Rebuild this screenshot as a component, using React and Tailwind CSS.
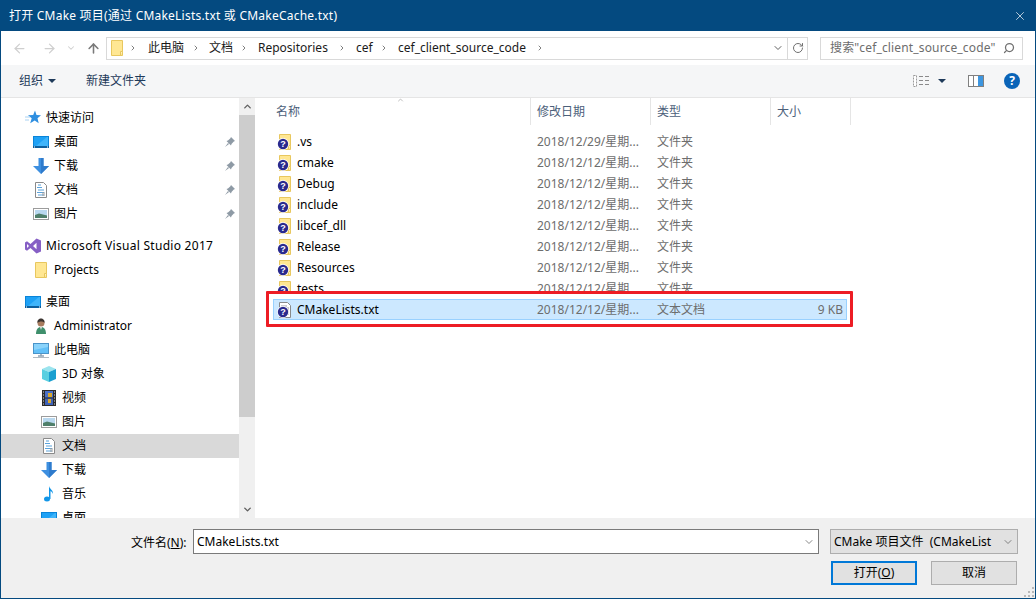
import { ChevronRight, ChevronDown, ChevronUp, ArrowLeft, ArrowRight, ArrowUp, RotateCw, Search, X } from 'lucide-react'

const Folder = ({ className = 'w-4 h-4' }) => (
  <svg viewBox="0 0 16 16" className={className}>
    <path d="M2.500.5h11v15h-11z" fill="#ffe793" stroke="#e8c75e" />
    <path d="M13.500 11.500h-2v4" fill="#fff3c0" stroke="#e8c75e" />
  </svg>
)

const Badge = () => (
  <svg viewBox="0 0 12 12" className="absolute left-0 bottom-0 w-[12px] h-[12px]">
    <circle cx="6" cy="6" r="5.900" fill="#fff" />
    <circle cx="6" cy="6" r="5.200" fill="#2a2a8e" />
    <text x="6" y="9.300" textAnchor="middle" fontSize="9" fontWeight="700" fill="#fff" fontFamily="Liberation Sans">?</text>
  </svg>
)

const Desktop = () => (
  <svg viewBox="0 0 16 16" className="w-4 h-4">
    <rect x="0" y="2" width="16" height="12" fill="#0a84d8" />
    <rect x="1" y="3" width="14" height="9" fill="#1ea1f5" />
    <path d="M3 12l11-9h1v9z" fill="#3fb4fa" />
    <rect x="0" y="12" width="16" height="2" fill="#0c5f9e" />
    <path d="M1 13h1M14 13h1" stroke="#fff" />
  </svg>
)

const Download = () => (
  <svg viewBox="0 0 16 16" className="w-4 h-4">
    <path d="M5.500 0h5v8H16l-8 8-8-8h5.500z" fill="#3d8fe0" />
    <path d="M8 0h2.500v8H16l-8 8z" fill="#2f7bcc" />
  </svg>
)

const Doc = () => (
  <svg viewBox="0 0 16 16" className="w-4 h-4">
    <path d="M2.500.5h8l3 3v12h-11z" fill="#fff" stroke="#8a8a8a" />
    <path d="M5 3h3M4 5.500h5M5 8h6M4 10.500h7M5 13h6" stroke="#5ba3dc" />
    <path d="M9 11h3M9 13h3" stroke="#9a9a9a" />
  </svg>
)

const Picture = () => (
  <svg viewBox="0 0 16 16" className="w-4 h-4">
    <rect x=".5" y="2.500" width="15" height="11" fill="#fff" stroke="#9c9c9c" />
    <rect x="2" y="4" width="12" height="8" fill="#b9d8ef" />
    <path d="M2 9l4-1.500 8 2V12H2z" fill="#4f7f6a" />
  </svg>
)

const VsLogo = () => (
  <svg viewBox="0 0 16 16" className="w-4 h-4">
    <path d="M11.500.5L16 2.500v11l-4.500 2L5.500 10l-3.500 2.700L0 11.500v-7L2 3.300 5.500 6z" fill="#865fc5" />
    <path d="M11.500 4.700L8 8l3.500 3.300zM2 6v4l2-2z" fill="#fff" />
  </svg>
)

const Person = () => (
  <svg viewBox="0 0 16 16" className="w-4 h-4">
    <path d="M3 16c0-4.500 2-7 5-7s5 2.500 5 7z" fill="#3f8f6c" />
    <circle cx="8" cy="5" r="3.500" fill="#a87c5f" />
    <path d="M4.500 5C4 2 6 .5 8 .5s4 1.500 3.500 4.500C10.500 3 6 3 4.500 5z" fill="#3b3430" />
    <path d="M7 9h2l-1 3z" fill="#e7e7e7" />
  </svg>
)

const Pc = () => (
  <svg viewBox="0 0 16 16" className="w-4 h-4">
    <rect x=".5" y="1.500" width="15" height="10" fill="#62c0f8" stroke="#4a94c9" />
    <path d="M1 2h14v3L1 8z" fill="#8ad3fb" />
    <path d="M5 14h6M8 12v2" stroke="#90a4b5" strokeWidth="1.500" />
    <path d="M0 15.500h16" stroke="#b0bac2" />
  </svg>
)

const Cube = () => (
  <svg viewBox="0 0 16 16" className="w-4 h-4">
    <path d="M8 0l7 3-7 3-7-3z" fill="#9be4ee" />
    <path d="M1 3l7 3v10l-7-3z" fill="#58cfe0" />
    <path d="M15 3L8 6v10l7-3z" fill="#1a9fd0" />
  </svg>
)

const Film = () => (
  <svg viewBox="0 0 16 16" className="w-4 h-4">
    <rect x="1" y="0" width="14" height="16" fill="#2b2b2b" />
    <rect x="4" y="1" width="8" height="6.500" fill="#4a70c8" />
    <rect x="4" y="8.500" width="8" height="6.500" fill="#3f63b8" />
    <rect x="7" y="3" width="4" height="4" fill="#d8a72c" />
    <rect x="7" y="9" width="3" height="4" fill="#d8a72c" />
    <path d="M2 2h1M2 5h1M2 8h1M2 11h1M2 14h1M13 2h1M13 5h1M13 8h1M13 11h1M13 14h1" stroke="#ddd" />
  </svg>
)

const Music = () => (
  <svg viewBox="0 0 16 16" className="w-4 h-4">
    <ellipse cx="6" cy="13" rx="3" ry="2.500" fill="#1296e8" />
    <path d="M8 13V0c.5 3 4.500 4 4 8-.5-2-2.500-3-2.500-3v8z" fill="#1296e8" />
  </svg>
)

const Star = () => (
  <svg viewBox="0 0 16 16" className="w-4 h-4">
    <path d="M10 .5l1.500 4.500 4.500.3-3.500 3 1.200 5-4-2.800-4.500 2.800 1.500-5L3 5.300l5.200-.3z" fill="#2f8fe0" />
    <path d="M0 7h5M0 10h4" stroke="#a9d2f2" />
  </svg>
)

const Pin = () => (
  <svg viewBox="0 0 10 10" className="w-[10px] h-[10px]">
    <path d="M6 0l4 4-1.200.6L6.500 7 6 8.500 1.500 4 3 3.500 5.400 1.200zM3 6l-3 4 4-3z" fill="#8e9aa5" />
  </svg>
)

const SmallDoc = () => (
  <svg viewBox="0 0 16 16" className="w-4 h-4">
    <path d="M2.500.5h8l3 3v12h-11z" fill="#fff" stroke="#8a8a8a" />
    <path d="M4 4h6M4 6h8M4 8h8M4 10h8M4 12h8" stroke="#9a9a9a" />
  </svg>
)

const sideGroups = [
  [
    { label: '快速访问', icon: Star, level: 0 },
    { label: '桌面', icon: Desktop, level: 1, pin: true },
    { label: '下载', icon: Download, level: 1, pin: true },
    { label: '文档', icon: Doc, level: 1, pin: true },
    { label: '图片', icon: Picture, level: 1, pin: true },
  ],
  [
    { label: 'Microsoft Visual Studio 2017', icon: VsLogo, level: 0, wide: true },
    { label: 'Projects', icon: Folder, level: 1 },
  ],
  [
    { label: '桌面', icon: Desktop, level: 0 },
    { label: 'Administrator', icon: Person, level: 1 },
    { label: '此电脑', icon: Pc, level: 1 },
    { label: '3D 对象', icon: Cube, level: 2 },
    { label: '视频', icon: Film, level: 2 },
    { label: '图片', icon: Picture, level: 2 },
    { label: '文档', icon: Doc, level: 2, selected: true },
    { label: '下载', icon: Download, level: 2 },
    { label: '音乐', icon: Music, level: 2 },
    { label: '桌面', icon: Desktop, level: 2 },
  ],
]

const indent = ['pl-[24px]', 'pl-[32px]', 'pl-[40px]']

const folders = [
  { name: '.vs', date: '2018/12/29/星期...' },
  { name: 'cmake', date: '2018/12/12/星期...' },
  { name: 'Debug', date: '2018/12/12/星期...' },
  { name: 'include', date: '2018/12/12/星期...' },
  { name: 'libcef_dll', date: '2018/12/12/星期...' },
  { name: 'Release', date: '2018/12/12/星期...' },
  { name: 'Resources', date: '2018/12/12/星期...' },
  { name: 'tests', date: '2018/12/12/星期...' },
]

const crumbs = [
  { label: '此电脑', cls: 'w-[47px] pl-[7px]' },
  { label: '文档', cls: 'w-[32px] pl-[5px]' },
  { label: 'Repositories', cls: 'w-[82px] pl-[6px]' },
  { label: 'cef', cls: 'w-[26px] pl-[6px]' },
  { label: 'cef_client_source_code', cls: 'w-[140px] pl-[6px]' },
]

function FileRow({ name, date, type, size, icon, selected }) {
  return (
    <div className={`relative z-10 flex items-center h-[21px] w-[574px] text-[#6d6d6d] ${selected ? 'bg-[#cce8ff] border border-[#99d1ff]' : ''}`}>
      <div className={`relative shrink-0 w-[16px] h-[16px] ${selected ? 'ml-[3px]' : 'ml-[4px]'}`}>
        {icon}
        <Badge />
      </div>
      <span className="w-[244px] pl-[4px] shrink-0 text-black truncate">{name}</span>
      <span className="w-[120px] shrink-0 whitespace-nowrap">{date}</span>
      <span className="w-[120px] shrink-0">{type}</span>
      <span className="w-[66px] shrink-0 text-right">{size}</span>
    </div>
  )
}

export default function App() {
  return (
    <div className="w-[1036px] h-[599px] flex flex-col overflow-hidden bg-white border border-[#044a80] text-[12px] text-black font-['Noto_Sans','Noto_Sans_CJK_SC',sans-serif]">
      {/* Title bar */}
      <div className="flex items-center justify-between h-[30px] shrink-0 pl-[8px] pr-[8px] bg-[#044a80] text-white">
        <span className="tracking-[0.22px]">打开 CMake 项目(通过 CMakeLists.txt 或 CMakeCache.txt)</span>
        <X className="w-[14px] h-[14px]" strokeWidth={1.2} />
      </div>

      {/* Address row */}
      <div className="flex items-center h-[34px] shrink-0 text-[#1a1a1a]">
        <ArrowLeft className="ml-[11px] w-[15px] h-[15px] text-[#cfcfcf]" strokeWidth={2} />
        <ArrowRight className="ml-[15px] w-[15px] h-[15px] text-[#cfcfcf]" strokeWidth={2} />
        <ChevronDown className="ml-[9px] w-[10px] h-[10px] text-[#cfcfcf]" strokeWidth={2.500} />
        <ArrowUp className="ml-[10px] w-[15px] h-[15px] text-[#7a7a7a]" strokeWidth={2.500} />
        <div className="flex items-center ml-[5px] w-[702px] h-[23px] border border-[#d9d9d9]">
          <Folder className="ml-[2px] w-[16px] h-[16px]" />
          {crumbs.map((c) => (
            <div key={c.label} className="flex items-center">
              <ChevronRight className="mx-[4px] w-[8px] h-[8px] text-[#808080]" strokeWidth={3} />
              <span className={`${c.cls} whitespace-nowrap`}>{c.label}</span>
            </div>
          ))}
          <ChevronRight className="mx-[4px] w-[8px] h-[8px] text-[#808080]" strokeWidth={3} />
          <ChevronDown className="ml-auto mr-[3px] w-[12px] h-[12px] text-[#606060]" strokeWidth={2} />
          <div className="flex items-center justify-center w-[20px] h-full border-l border-[#d9d9d9]">
            <RotateCw className="w-[12px] h-[12px] text-[#707070]" strokeWidth={2} />
          </div>
        </div>
        <div className="flex items-center ml-[12px] w-[203px] h-[23px] pl-[9px] border border-[#d9d9d9] text-[#6d6d6d]">
          <span className="whitespace-nowrap tracking-[0.15px]">搜索"cef_client_source_code"</span>
          <Search className="ml-auto mr-[7px] w-[12px] h-[12px] text-[#707070] -scale-x-100" strokeWidth={2.500} />
        </div>
      </div>

      {/* Toolbar */}
      <div className="flex items-center h-[33px] shrink-0 bg-[#f5f6f7] border-b border-[#e5e5e5] text-[#1e3a5a]">
        <span className="ml-[18px]">组织</span>
        <span className="ml-[5px] w-0 h-0 border-x-[4px] border-x-transparent border-t-[4px] border-t-[#1e3a5a]" />
        <span className="ml-[30px]">新建文件夹</span>
        <svg viewBox="0 0 16 12" className="ml-auto w-[16px] h-[12px]">
          <path d="M.5.500h3v11h-3z" fill="#fff" stroke="#9a9a9a" strokeDasharray="2 1" />
          <path d="M6 1.500h4M12 1.500h4M6 5.500h4M12 5.500h4M6 9.500h4M12 9.500h4" stroke="#8a8a8a" />
        </svg>
        <span className="ml-[9px] w-0 h-0 border-x-[4px] border-x-transparent border-t-[4px] border-t-[#1e3a5a]" />
        <svg viewBox="0 0 16 12" className="ml-[22px] w-[16px] h-[12px]">
          <rect x=".5" y=".5" width="15" height="11" fill="#fff" stroke="#808080" />
          <rect x="10" y="1" width="5" height="10" fill="#3d96e0" />
          <path d="M5.500 1v10" stroke="#808080" />
        </svg>
        <div className="flex items-center justify-center ml-[20px] mr-[15px] w-[16px] h-[16px] rounded-full bg-[#0a64b8] text-white font-bold text-[12px] leading-none">?</div>
      </div>

      {/* Body */}
      <div className="flex flex-1 min-h-0">
        {/* Sidebar */}
        <div className="w-[238px] shrink-0 overflow-hidden pt-[8px]">
          {sideGroups.map((group, gi) => (
            <div key={gi} className="mb-[8px]">
              {group.map((item) => {
                const Icon = item.icon
                return (
                  <div key={item.label + item.level} className={`flex items-center h-[24px] ${indent[item.level]} ${item.selected ? 'bg-[#d9d9d9]' : ''}`}>
                    <div className="flex justify-center w-[16px] shrink-0"><Icon /></div>
                    <span className={`ml-[5px] whitespace-nowrap ${item.wide ? 'tracking-[0.28px]' : ''}`}>{item.label}</span>
                    {item.pin && <span className="ml-auto mr-[4px] flex"><Pin /></span>}
                  </div>
                )
              })}
            </div>
          ))}
        </div>

        {/* Scrollbar */}
        <div className="flex flex-col w-[16px] shrink-0 bg-[#f0f0f0]">
          <div className="flex items-center justify-center h-[17px]">
            <ChevronUp className="w-[11px] h-[11px] text-[#606060]" strokeWidth={3} />
          </div>
          <div className="h-[302px] bg-[#cdcdcd]" />
          <div className="flex items-center justify-center mt-auto h-[17px]">
            <ChevronDown className="w-[11px] h-[11px] text-[#606060]" strokeWidth={3} />
          </div>
        </div>

        {/* File list */}
        <div className="flex-1 min-w-0">
          <div className="relative flex h-[27px] ml-[16px] text-[#4c607a]">
            <ChevronUp className="absolute left-[124px] top-[-2px] w-[11px] h-[8px] text-[#808080]" strokeWidth={1.500} />
            <div className="w-[260px] pl-[5px] pt-[5px] border-r border-[#e5e5e5]">名称</div>
            <div className="w-[120px] pl-[6px] pt-[5px] border-r border-[#e5e5e5]">修改日期</div>
            <div className="w-[120px] pl-[6px] pt-[5px] border-r border-[#e5e5e5]">类型</div>
            <div className="w-[80px] pl-[6px] pt-[5px] border-r border-[#e5e5e5]">大小</div>
          </div>
          <div className="ml-[18px] pt-[6px]">
            {folders.map((f) => (
              <FileRow key={f.name} name={f.name} date={f.date} type="文件夹" icon={<Folder />} />
            ))}
            <div className="relative w-[574px]">
              <div className="absolute -left-[7px] -top-[8px] -right-[6px] -bottom-[7px] z-10 bg-white border-[3px] border-[#ed1c24] rounded-[1px]" />
              <FileRow selected name="CMakeLists.txt" date="2018/12/12/星期..." type="文本文档" size="9 KB" icon={<SmallDoc />} />
            </div>
          </div>
        </div>
      </div>

      {/* Bottom panel */}
      <div className="flex h-[80px] shrink-0 bg-[#f0f0f0] pt-[11px]">
        <div className="flex items-start">
          <span className="ml-[130px] mt-[5px] w-[62px] whitespace-nowrap">文件名(<u>N</u>):</span>
          <div className="flex items-center justify-between w-[626px] h-[25px] pl-[3px] pr-[3px] bg-white border border-[#7a7a7a]">
            <span className="pt-px">CMakeLists.txt</span>
            <ChevronDown className="w-[12px] h-[12px] text-[#606060]" strokeWidth={1.500} />
          </div>
        </div>
        <div className="flex flex-col ml-[11px]">
          <div className="flex items-center justify-between w-[188px] h-[25px] pl-[3px] pr-[3px] bg-[#e1e1e1] border border-[#adadad]">
            <span className="whitespace-pre overflow-hidden w-[165px]">CMake 项目文件  (CMakeList</span>
            <ChevronDown className="shrink-0 w-[12px] h-[12px] text-[#606060]" strokeWidth={1.500} />
          </div>
          <div className="flex justify-between w-[187px] mt-[7px] pl-[1px]">
            <div className="flex items-center justify-center w-[86px] h-[24px] bg-[#e1e1e1] border-2 border-[#0078d7]">打开(<u>O</u>)</div>
            <div className="flex items-center justify-center w-[86px] h-[24px] bg-[#e1e1e1] border border-[#adadad]">取消</div>
          </div>
        </div>
        <svg viewBox="0 0 10 10" className="ml-auto mr-[1px] mb-[1px] self-end w-[10px] h-[10px]">
          <path d="M8 0h2v2H8zM4 4h2v2H4zM8 4h2v2H8zM0 8h2v2H0zM4 8h2v2H4zM8 8h2v2H8z" fill="#b8b8b8" />
        </svg>
      </div>
    </div>
  )
}
